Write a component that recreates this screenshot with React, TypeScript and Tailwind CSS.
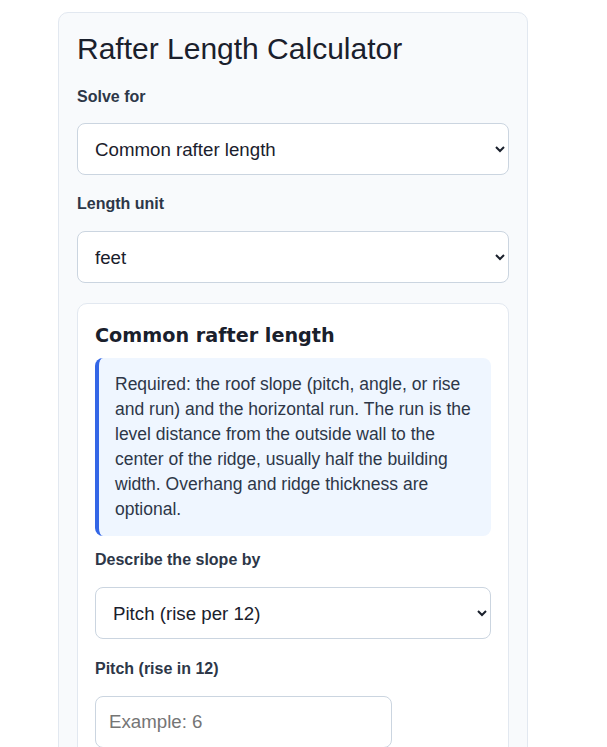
import { useState } from 'react'

export default function App() {
  const [solveFor, setSolveFor] = useState('common')
  const [unit, setUnit] = useState('feet')
  const [slopeBy, setSlopeBy] = useState('pitch')
  const [pitch, setPitch] = useState('')

  const labelClass = 'block text-[16px] leading-[22px] font-bold text-[#2d3748]'
  const selectClass =
    'block w-full h-[52px] pl-[13px] pr-[12px] text-[18.7px] text-[#1a202c] bg-white border border-[#cbd5e0] rounded-[8px]'

  return (
    <div className="min-h-screen bg-white pt-[12px] pl-[58px] font-['Liberation_Sans',Arial,sans-serif]">
      <div className="w-[470px] bg-[#f8fafc] border border-[#e2e8f0] rounded-[10px] px-[18px] pt-[18px] pb-6">
        <h1 className="text-[30px] leading-[35px] text-[#1a202c] font-normal">Rafter Length Calculator</h1>

        {/* Top level controls */}
        <label className={`${labelClass} mt-[20px]`}>Solve for</label>
        <select value={solveFor} onChange={(e) => setSolveFor(e.target.value)} className={`${selectClass} mt-[15px]`}>
          <option value="common">Common rafter length</option>
          <option value="hip">Hip or valley rafter length</option>
          <option value="pitch">Roof pitch</option>
        </select>

        <label className={`${labelClass} mt-[18px]`}>Length unit</label>
        <select value={unit} onChange={(e) => setUnit(e.target.value)} className={`${selectClass} mt-[16px]`}>
          <option value="feet">feet</option>
          <option value="inches">inches</option>
          <option value="meters">meters</option>
        </select>

        {/* Mode panel */}
        <div className="mt-[20px] bg-white border border-[#e2e8f0] rounded-[10px] px-[17px] pt-[17px] pb-6">
          <h2 className="text-[19.2px] leading-[30px] font-bold text-[#1a202c] font-['DejaVu_Sans',Verdana,sans-serif]">
            Common rafter length
          </h2>
          <div className="mt-[7px] bg-[#eff6ff] border-l-4 border-[#3366e6] rounded-[8px] pl-[16px] pr-[16px] py-[14px] text-[17.5px] leading-[25px] text-[#2d3748]">
            Required: the roof slope (pitch, angle, or rise and run) and the horizontal run. The run is the level
            distance from the outside wall to the center of the ridge, usually half the building width. Overhang and
            ridge thickness are optional.
          </div>

          <label className={`${labelClass} mt-[13px]`}>Describe the slope by</label>
          <select value={slopeBy} onChange={(e) => setSlopeBy(e.target.value)} className={`${selectClass} mt-[16px]`}>
            <option value="pitch">Pitch (rise per 12)</option>
            <option value="angle">Angle (degrees)</option>
            <option value="rise">Rise and run</option>
          </select>

          <label className={`${labelClass} mt-[19px]`}>Pitch (rise in 12)</label>
          <input
            type="text"
            value={pitch}
            onChange={(e) => setPitch(e.target.value)}
            placeholder="Example: 6"
            className="block mt-[16px] w-[297px] h-[52px] px-[13px] text-[18.7px] text-[#1a202c] placeholder:text-[#757575] bg-white border border-[#cbd5e0] rounded-[8px]"
          />
        </div>
      </div>
    </div>
  )
}
